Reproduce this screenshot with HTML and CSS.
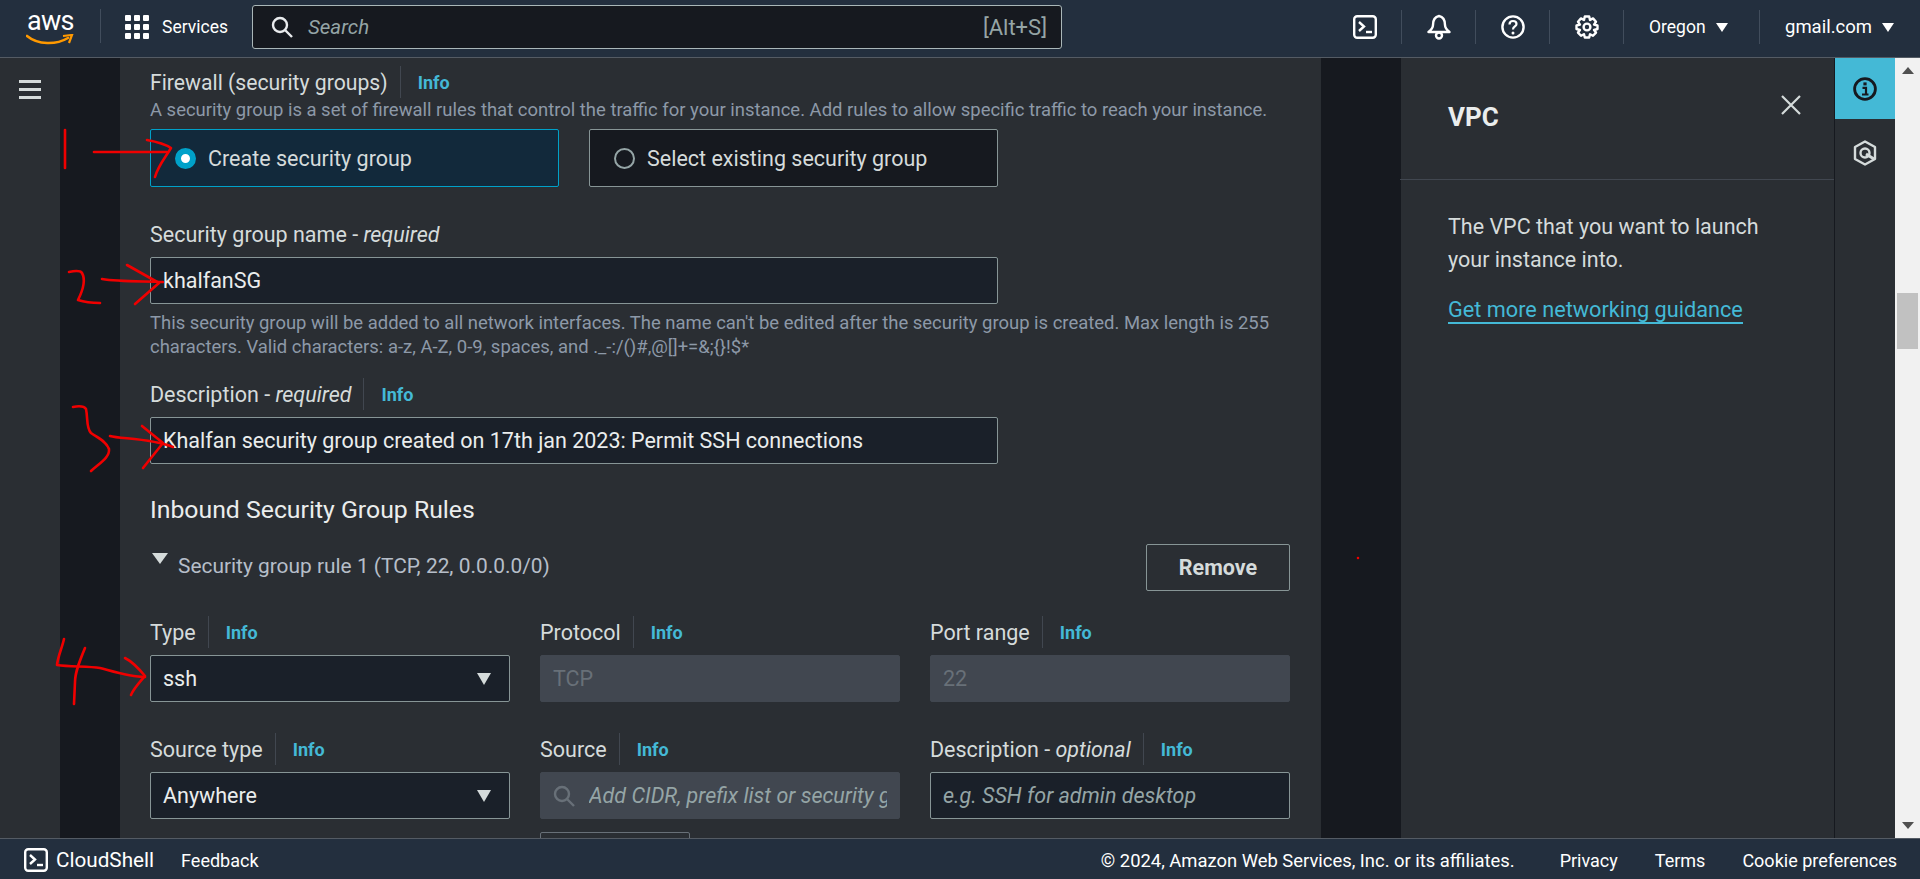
FILE: index.html
```html
<!DOCTYPE html>
<html lang="en">
<head>
    <meta charset="UTF-8">
    <meta name="viewport" content="width=device-width, initial-scale=1.0">
    <title>Launch an instance</title>
    <link rel="stylesheet" href="styles.css">
</head>
<body>
    <header class="topbar">
        <div class="logo">
            <span class="logo-text">aws</span>
            <svg class="logo-smile" width="48" height="12" viewBox="0 0 48 12">
                <path d="M1 2 C12 11 30 11 42 4" fill="none" stroke="#ff9900" stroke-width="2.6" stroke-linecap="round"/>
                <path d="M37 2 L46 1 L43 9" fill="none" stroke="#ff9900" stroke-width="2.2"/>
            </svg>
        </div>
        <div class="services">
            <svg width="24" height="24" viewBox="0 0 24 24" fill="#fff">
                <rect x="0" y="0" width="6" height="6" rx="1"/><rect x="9" y="0" width="6" height="6" rx="1"/><rect x="18" y="0" width="6" height="6" rx="1"/>
                <rect x="0" y="9" width="6" height="6" rx="1"/><rect x="9" y="9" width="6" height="6" rx="1"/><rect x="18" y="9" width="6" height="6" rx="1"/>
                <rect x="0" y="18" width="6" height="6" rx="1"/><rect x="9" y="18" width="6" height="6" rx="1"/><rect x="18" y="18" width="6" height="6" rx="1"/>
            </svg>
            <span>Services</span>
        </div>
        <div class="search">
            <svg width="22" height="22" viewBox="0 0 22 22" fill="none" stroke="#e9ebed" stroke-width="2.4">
                <circle cx="9" cy="9" r="7"/><path d="M14 14 L21 21"/>
            </svg>
            <span class="search-text">Search</span>
            <span class="search-key">[Alt+S]</span>
        </div>
        <div class="top-icons">
            <div class="top-icon">
                <svg width="24" height="24" viewBox="0 0 24 24" fill="none" stroke="#fff" stroke-width="2.4">
                    <rect x="1.2" y="1.2" width="21.6" height="21.6" rx="3"/>
                    <path d="M6 7 L11 11.5 L6 16" /><path d="M13 17 H19"/>
                </svg>
            </div>
            <div class="top-icon">
                <svg width="24" height="26" viewBox="0 0 24 26" fill="none" stroke="#fff" stroke-width="2.4" stroke-linejoin="round">
                    <path d="M12 2 C7 3 6 7 6 11 C6 14 4 16 1.5 18 H22.5 C20 16 18 14 18 11 C18 7 17 3 12 2 Z"/>
                    <circle cx="12" cy="21.5" r="3"/>
                </svg>
            </div>
            <div class="top-icon">
                <svg width="24" height="24" viewBox="0 0 24 24" fill="none" stroke="#fff" stroke-width="2.4">
                    <circle cx="12" cy="12" r="10.6"/>
                    <path d="M8.5 9.5 C8.5 7 10 6 12 6 C14 6 15.5 7.2 15.5 9 C15.5 11.5 12 11.5 12 14.5" stroke-width="2.2"/>
                    <circle cx="12" cy="18" r="1.5" fill="#fff" stroke="none"/>
                </svg>
            </div>
            <div class="top-icon">
                <svg width="24" height="24" viewBox="0 0 24 24" fill="none" stroke="#fff" stroke-width="2.4" stroke-linejoin="round">
                    <path d="M9.8 1.5 H14.2 L15 5 L18 3.4 L21 6.8 L19 9.6 L22.5 10.5 V14 L19 15 L21 17.6 L18 20.8 L15 19.2 L14.2 22.5 H9.8 L9 19.2 L6 20.8 L3 17.6 L5 15 L1.5 14 V10.5 L5 9.6 L3 6.8 L6 3.4 L9 5 Z"/>
                    <circle cx="12" cy="12" r="3.4"/>
                </svg>
            </div>
            <div class="top-menu top-menu-region"><span>Oregon</span><i class="caret"></i></div>
            <div class="top-menu top-menu-user"><span>gmail.com</span><i class="caret"></i></div>
        </div>
    </header>

    <div class="middle">
        <nav class="side-nav">
            <div class="burger"><i></i><i></i><i></i></div>
        </nav>
        <div class="gutter-left"></div>

        <main class="content">
            <div class="label-row firewall-label">
                <span class="label label-firewall">Firewall (security groups)</span><a class="info">Info</a>
            </div>
            <p class="hint firewall-hint">A security group is a set of firewall rules that control the traffic for your instance. Add rules to allow specific traffic to reach your instance.</p>

            <div class="radio-row">
                <div class="radio-card radio-card-on"><i class="radio radio-on"></i><span>Create security group</span></div>
                <div class="radio-card"><i class="radio"></i><span>Select existing security group</span></div>
            </div>

            <div class="label-row name-label"><span class="label">Security group name - <em>required</em></span></div>
            <div class="field field-wide">khalfanSG</div>
            <p class="hint name-hint">This security group will be added to all network interfaces. The name can't be edited after the security group is created. Max length is 255 characters. Valid characters: a-z, A-Z, 0-9, spaces, and ._-:/()#,@[]+=&amp;;{}!$*</p>

            <div class="label-row desc-label"><span class="label">Description - <em>required</em></span><a class="info">Info</a></div>
            <div class="field field-wide">Khalfan security group created on 17th jan 2023: Permit SSH connections</div>

            <h2 class="rules-title">Inbound Security Group Rules</h2>

            <div class="rule-head">
                <div class="rule-name"><i class="rule-caret"></i><span>Security group rule 1 (TCP, 22, 0.0.0.0/0)</span></div>
                <button class="btn-remove">Remove</button>
            </div>

            <div class="rule-grid">
                <div class="rule-col">
                    <div class="label-row"><span class="label">Type</span><a class="info">Info</a></div>
                    <div class="field field-select">ssh<i class="select-caret"></i></div>
                </div>
                <div class="rule-col">
                    <div class="label-row"><span class="label">Protocol</span><a class="info">Info</a></div>
                    <div class="field field-off">TCP</div>
                </div>
                <div class="rule-col">
                    <div class="label-row"><span class="label">Port range</span><a class="info">Info</a></div>
                    <div class="field field-off">22</div>
                </div>
                <div class="rule-col">
                    <div class="label-row"><span class="label">Source type</span><a class="info">Info</a></div>
                    <div class="field field-select">Anywhere<i class="select-caret"></i></div>
                </div>
                <div class="rule-col">
                    <div class="label-row"><span class="label">Source</span><a class="info">Info</a></div>
                    <div class="field field-off field-source">
                        <svg width="22" height="22" viewBox="0 0 22 22" fill="none" stroke="#687078" stroke-width="2.4">
                            <circle cx="9" cy="9" r="7"/><path d="M14 14 L21 21"/>
                        </svg>
                        <em class="source-text">Add CIDR, prefix list or security group</em>
                    </div>
                    <div class="cidr-chip"></div>
                </div>
                <div class="rule-col">
                    <div class="label-row"><span class="label">Description - <em>optional</em></span><a class="info">Info</a></div>
                    <div class="field placeholder"><em>e.g. SSH for admin desktop</em></div>
                </div>
            </div>
        </main>

        <div class="gutter-right"></div>

        <aside class="help">
            <div class="help-head">
                <h3>VPC</h3>
                <svg class="help-close" width="22" height="22" viewBox="0 0 22 22" fill="none" stroke="#d5dbdb" stroke-width="2.2">
                    <path d="M2 2 L20 20 M20 2 L2 20"/>
                </svg>
            </div>
            <div class="help-body">
                <p>The VPC that you want to launch your instance into.</p>
                <a class="help-link">Get more networking guidance</a>
            </div>
        </aside>

        <div class="rail">
            <div class="rail-tab rail-tab-on">
                <svg width="24" height="24" viewBox="0 0 24 24" fill="none" stroke="#16191f" stroke-width="2.8">
                    <circle cx="12" cy="12" r="10.4"/>
                    <rect x="10.4" y="5.4" width="3.2" height="3" fill="#16191f" stroke="none"/>
                    <path d="M9.5 10.8 H13 V17.5 M9 17.5 H15.5" stroke-width="2.2"/>
                </svg>
            </div>
            <div class="rail-tab">
                <svg width="24" height="26" viewBox="0 0 24 26" fill="none" stroke="#d5dbdb" stroke-width="2.4" stroke-linejoin="round">
                    <path d="M12 1.5 L22 7 V19 L12 24.5 L2 19 V7 Z"/>
                    <circle cx="12" cy="13" r="4.5"/>
                    <path d="M13 14 L21 19" stroke-width="3"/>
                </svg>
            </div>
        </div>

        <div class="scrollbar">
            <i class="scroll-up"></i>
            <div class="scroll-track"><div class="scroll-thumb"></div></div>
            <i class="scroll-down"></i>
        </div>
    </div>

    <footer class="bottombar">
        <div class="foot-left">
            <svg width="24" height="24" viewBox="0 0 24 24" fill="none" stroke="#fff" stroke-width="2.4">
                <rect x="1.2" y="1.2" width="21.6" height="21.6" rx="3"/>
                <path d="M6 7 L11 11.5 L6 16"/><path d="M13 17 H19"/>
            </svg>
            <span class="foot-shell">CloudShell</span>
            <span class="foot-feedback">Feedback</span>
        </div>
        <div class="foot-right">
            <span class="foot-copy">© 2024, Amazon Web Services, Inc. or its affiliates.</span>
            <span>Privacy</span>
            <span>Terms</span>
            <span>Cookie preferences</span>
        </div>
    </footer>

    <!-- red pen marks drawn over the screenshot -->
    <svg class="pen" width="1920" height="879" viewBox="0 0 1920 879" fill="none" stroke="#f00000" stroke-width="2.6" stroke-linecap="round" stroke-linejoin="round">
        <path d="M65 130 V168"/>
        <path d="M94 152 H167"/>
        <path d="M147 140 C158 142 165 144 171 148 C165 158 158 166 155 177"/>
        <path d="M69 272 C74 271 80 270 82 273 C86 280 82 292 78 300 C84 302 92 303 100 303"/>
        <path d="M102 279 C120 282 145 281 163 282"/>
        <path d="M127 265 L159 283 L135 304"/>
        <path d="M73 407 C78 406 84 406 86 409 C88 418 86 428 91 433 C98 438 106 441 109 449 C110 458 98 464 91 471"/>
        <path d="M110 436 C120 439 150 438 173 447"/>
        <path d="M142 426 L163 443 L143 468"/>
        <path d="M64 639 C62 648 58 656 57 665 C70 667 88 666 100 668 C115 672 130 677 145 677"/>
        <path d="M85 648 C80 660 75 672 75 682 L74 704"/>
        <path d="M125 658 C133 662 140 670 145 676 C140 682 134 688 131 695"/>
        <circle cx="1358" cy="558" r="0.6" stroke-width="1.4"/>
    </svg>
</body>
</html>
```

FILE: styles.css
```css
* {
    box-sizing: border-box;
}
html, body {
    height: 100%;
}
body {
    margin: 0;
    overflow: hidden;
    display: flex;
    flex-direction: column;
    background-color: #2a2e33;
    color: #d5dbdb;
    font-family: Roboto, "Liberation Sans", sans-serif;
    font-size: 21.5px;
}
em {
    font-style: italic;
}

/* top bar */
.topbar {
    flex: 0 0 58px;
    display: flex;
    align-items: center;
    padding-bottom: 3px;
    background-color: #232f3e;
    border-bottom: 1px solid #545b64;
    color: #fff;
    font-size: 17.5px;
}
.logo {
    position: relative;
    width: 101px;
    height: 34px;
    margin-top: -2px;
    border-right: 1px solid #414d5c;
    padding-left: 27px;
}
.logo-text {
    display: block;
    font-size: 27px;
    line-height: 24px;
    letter-spacing: -0.8px;
}
.logo-smile {
    position: absolute;
    left: 26px;
    top: 25px;
}
.services {
    display: flex;
    align-items: center;
    gap: 13px;
    width: 151px;
    padding-left: 24px;
}
.search {
    width: 810px;
    height: 44px;
    display: flex;
    align-items: center;
    padding: 0 14px 0 18px;
    background-color: #16191f;
    border: 1px solid #aab7b8;
    border-radius: 3px;
}
.search-text {
    margin-left: 15px;
    font-size: 20.5px;
    font-style: italic;
    color: #95a5a6;
}
.search-key {
    margin-left: auto;
    font-size: 22px;
    color: #95a5a6;
}
.top-icons {
    margin-left: auto;
    display: flex;
    align-items: center;
    height: 34px;
}
.top-icon {
    width: 74px;
    height: 34px;
    display: flex;
    align-items: center;
    justify-content: center;
    border-right: 1px solid #414d5c;
}
.top-menu {
    height: 34px;
    display: flex;
    align-items: center;
    gap: 10px;
    padding-left: 25px;
}
.top-menu-region {
    width: 136px;
    border-right: 1px solid #414d5c;
}
.top-menu-user {
    width: 160px;
    font-size: 18.5px;
}
.caret {
    width: 0;
    height: 0;
    border-left: 6px solid transparent;
    border-right: 6px solid transparent;
    border-top: 9px solid #fff;
}

/* middle */
.middle {
    flex: 1;
    min-height: 0;
    display: flex;
}
.side-nav {
    flex: 0 0 60px;
    padding: 22px 19px 0;
    background-color: #2a2e33;
}
.burger i {
    display: block;
    height: 3px;
    margin-bottom: 5px;
    background-color: #d5dbdb;
}
.gutter-left {
    flex: 0 0 60px;
    background-color: #16191f;
}
.gutter-right {
    flex: 0 0 79px;
    background-color: #16191f;
}
.content {
    flex: 0 0 1201px;
    padding: 0 31px 0 30px;
    overflow: hidden;
    background-color: #2a2e33;
}
.label-row {
    display: flex;
    align-items: center;
    height: 26px;
    white-space: nowrap;
}
.label {
    color: #d5dbdb;
}
.label-firewall {
    font-size: 21.2px;
}
.info {
    margin-left: 12px;
    padding-left: 17px;
    padding-top: 2px;
    border-left: 1px solid #414750;
    color: #44b9d6;
    font-size: 18px;
    font-weight: 700;
    line-height: 30px;
}
.hint {
    margin: 0;
    color: #8d99a8;
    font-size: 18.47px;
    line-height: 24px;
}
.firewall-label {
    margin-top: 11px;
}
.firewall-hint {
    margin-top: 3px;
    white-space: nowrap;
}
.radio-row {
    display: flex;
    gap: 30px;
    margin-top: 7px;
}
.radio-card {
    width: 409px;
    height: 58px;
    display: flex;
    align-items: center;
    gap: 12px;
    padding-left: 24px;
    border: 1px solid #879596;
    border-radius: 2px;
    background-color: #16191f;
}
.radio-card-on {
    background-color: #12293b;
    border-color: #00a1c9;
}
.radio {
    width: 21px;
    height: 21px;
    border-radius: 50%;
    border: 2px solid #95a5a6;
}
.radio-on {
    border: 6px solid #00a1c9;
    background-color: #fff;
}
.name-label {
    margin-top: 34px;
}
.field {
    height: 47px;
    display: flex;
    align-items: center;
    padding: 0 12px;
    border: 1px solid #879596;
    border-radius: 2px;
    background-color: #1a2029;
    color: #eaeded;
}
.field-wide {
    width: 848px;
    margin-top: 10px;
}
.name-hint {
    width: 1140px;
    margin-top: 7px;
}
.desc-label {
    margin-top: 22px;
}
.rules-title {
    margin: 32px 0 0;
    font-size: 24.8px;
    font-weight: 400;
    line-height: 28px;
    color: #eaeded;
}
.rule-head {
    display: flex;
    justify-content: space-between;
    align-items: center;
    margin-top: 20px;
}
.rule-name {
    display: flex;
    align-items: center;
    color: #b6bec9;
    font-size: 20.9px;
}
.rule-name span {
    margin-top: -4px;
}
.rule-caret {
    width: 0;
    height: 0;
    margin: -18px 10px 0 2px;
    border-left: 8px solid transparent;
    border-right: 8px solid transparent;
    border-top: 11px solid #d5dbdb;
}
.btn-remove {
    width: 144px;
    height: 47px;
    border: 1px solid #879596;
    border-radius: 2px;
    background: transparent;
    color: #d5dbdb;
    font-family: inherit;
    font-size: 21.5px;
    font-weight: 700;
}
.rule-grid {
    display: grid;
    grid-template-columns: repeat(3, 360px);
    column-gap: 30px;
    row-gap: 34px;
    margin-top: 28px;
}
.field-select {
    position: relative;
    margin-top: 10px;
}
.select-caret {
    position: absolute;
    right: 18px;
    top: 17px;
    width: 0;
    height: 0;
    border-left: 7px solid transparent;
    border-right: 7px solid transparent;
    border-top: 12px solid #d5dbdb;
}
.field-off {
    margin-top: 10px;
    border-color: #414750;
    background-color: #414750;
    color: #687078;
}
.field-source {
    gap: 14px;
    white-space: nowrap;
    color: #95a5a6;
}
.field-source svg {
    flex: none;
}
.source-text {
    min-width: 0;
    overflow: hidden;
}
.cidr-chip {
    width: 150px;
    height: 30px;
    margin-top: 13px;
    border: 1px solid #687078;
    border-radius: 2px;
}
.placeholder {
    margin-top: 10px;
    color: #95a5a6;
}

/* help panel */
.help {
    flex: 0 0 435px;
    background-color: #2a2e33;
    border-right: 1px solid #16191f;
    box-shadow: inset 1px 0 0 #16191f;
}
.help-head {
    position: relative;
    height: 122px;
    padding: 44px 0 0 48px;
    border-bottom: 1px solid #414750;
}
.help-head h3 {
    margin: 0;
    font-size: 26px;
    font-weight: 700;
    line-height: 30px;
    color: #eaeded;
}
.help-close {
    position: absolute;
    right: 32px;
    top: 36px;
}
.help-body {
    padding: 30px 50px 0 48px;
    line-height: 33px;
}
.help-body p {
    margin: 0;
}
.help-link {
    display: inline-block;
    margin-top: 21px;
    color: #44b9d6;
    font-size: 21.7px;
    line-height: 25px;
    border-bottom: 2px solid #44b9d6;
}

/* tools rail and scrollbar */
.rail {
    flex: 0 0 60px;
    background-color: #2a2e33;
}
.rail-tab {
    height: 62px;
    display: flex;
    align-items: center;
    justify-content: center;
    padding-top: 6px;
}
.rail-tab-on {
    height: 61px;
    padding-top: 0;
    background-color: #44b9d6;
}
.scrollbar {
    flex: 0 0 25px;
    display: flex;
    flex-direction: column;
    align-items: center;
    background-color: #f1f1f1;
}
.scroll-up, .scroll-down {
    flex: none;
    width: 0;
    height: 0;
    margin: 9px 0;
    border-left: 6px solid transparent;
    border-right: 6px solid transparent;
}
.scroll-up {
    border-bottom: 7px solid #505050;
}
.scroll-down {
    border-top: 7px solid #505050;
}
.scroll-track {
    flex: 1;
    width: 100%;
    padding: 210px 2px 0;
}
.scroll-thumb {
    height: 56px;
    background-color: #c1c1c1;
}

/* footer */
.bottombar {
    flex: 0 0 41px;
    display: flex;
    align-items: center;
    justify-content: space-between;
    padding: 2px 23px 0 24px;
    background-color: #232f3e;
    border-top: 1px solid #545b64;
    color: #fff;
    font-size: 18px;
}
.foot-left, .foot-right {
    display: flex;
    align-items: center;
}
.foot-shell {
    margin-left: 8px;
    font-size: 20.7px;
}
.foot-feedback {
    margin-left: 27px;
}
.foot-right {
    gap: 37px;
}
.foot-copy {
    margin-right: 8px;
    font-size: 18.4px;
}

/* pen marks */
.pen {
    position: absolute;
    left: 0;
    top: 0;
    pointer-events: none;
}
```
